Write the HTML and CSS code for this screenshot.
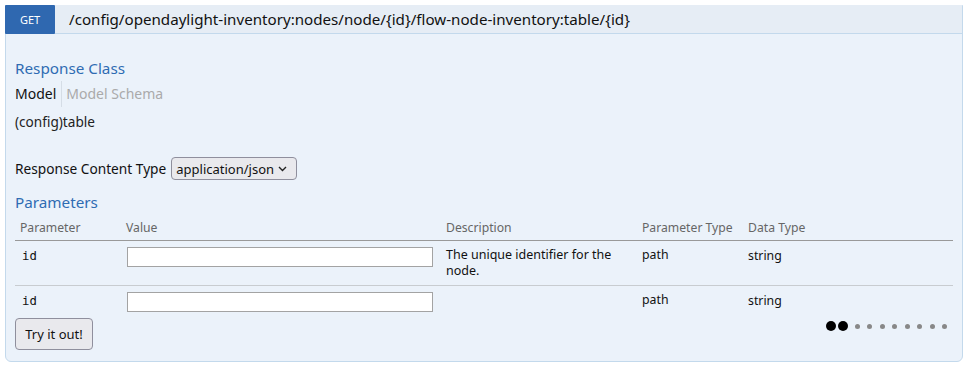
FILE: index.html
```html
<!DOCTYPE html>
<html>
<head>
<meta charset="utf-8">
<link rel="stylesheet" href="styles.css">
</head>
<body>
<div class="op">
  <div class="heading">
    <span class="method">GET</span>
    <span class="path">/config/opendaylight-inventory:nodes/node/{id}/flow-node-inventory:table/{id}</span>
  </div>
  <div class="content">
    <h4 class="title">Response Class</h4>
    <div class="tabs">
      <span class="tab active">Model</span>
      <span class="tab">Model Schema</span>
    </div>
    <div class="model">(config)table</div>
    <div class="ctype">
      <span>Response Content Type</span>
      <span class="select">application/json
        <svg class="chev" width="9" height="6" viewBox="0 0 9 6"><path d="M1 1 L4.5 4.5 L8 1" fill="none" stroke="#222" stroke-width="1.4"/></svg>
      </span>
    </div>
    <h4 class="title params">Parameters</h4>
    <table class="ptable">
      <colgroup>
        <col class="c1"><col class="c2"><col class="c3"><col class="c4"><col class="c5">
      </colgroup>
      <thead>
        <tr><th>Parameter</th><th>Value</th><th>Description</th><th>Parameter Type</th><th>Data Type</th></tr>
      </thead>
      <tbody>
        <tr class="r1">
          <td class="code">id</td>
          <td><input class="inp" type="text"></td>
          <td class="desc">The unique identifier for the node.</td>
          <td class="pt">path</td>
          <td class="dt">string</td>
        </tr>
        <tr class="r2">
          <td class="code">id</td>
          <td><input class="inp" type="text"></td>
          <td class="desc"></td>
          <td class="pt">path</td>
          <td class="dt">string</td>
        </tr>
      </tbody>
    </table>
    <div class="actions">
      <button class="try">Try it out!</button>
      <div class="dots">
        <span class="dot big"></span><span class="dot big"></span>
        <span class="dot"></span><span class="dot"></span><span class="dot"></span><span class="dot"></span><span class="dot"></span><span class="dot"></span><span class="dot"></span><span class="dot"></span>
      </div>
    </div>
  </div>
</div>
</body>
</html>
```
FILE: styles.css
```css
html, body {
  margin: 0;
  padding: 0;
  background: #ffffff;
}
body {
  padding: 5px;
  font-family: "Noto Sans", "Open Sans", sans-serif;
  color: #222;
}
.op {
  width: 958px;
  box-sizing: border-box;
  border: 1px solid #c3d9ec;
  border-radius: 0 0 6px 6px;
  background: #ebf2fa;
}
.heading {
  display: flex;
  align-items: center;
  height: 28px;
  background: #e6edf5;
  border-bottom: 1px solid #c3d9ec;
  margin: -1px 0 0 -1px;
}
.method {
  width: 50px;
  height: 29px;
  background: #2f68b0;
  color: #fff;
  font-size: 11px;
  display: flex;
  align-items: center;
  justify-content: center;
  border-radius: 1px;
  margin-bottom: -1px;
}
.path {
  margin-left: 14px;
  font-size: 15.15px;
  color: #111;
}
.content {
  padding: 23px 9px 11px 9px;
}
.title {
  margin: 0;
  font-size: 15.25px;
  font-weight: normal;
  color: #2f6cb3;
  line-height: 22px;
}
.tabs {
  display: flex;
  align-items: center;
  margin-top: 2px;
  height: 26px;
  font-size: 14px;
}
.tab {
  color: #aaa;
  padding-left: 4px;
  line-height: 26px;
}
.tab.active {
  color: #111;
  padding-left: 0;
  padding-right: 5px;
  border-right: 1px solid #d5dde6;
}
.model {
  font-size: 13.6px;
  margin-top: 6px;
  line-height: 18px;
  color: #222;
}
.ctype {
  display: flex;
  align-items: center;
  margin-top: 26px;
  font-size: 13.7px;
  color: #111;
}
.select {
  display: inline-flex;
  align-items: center;
  margin-left: 5px;
  height: 23px;
  width: 126px;
  box-sizing: border-box;
  padding: 0 9px 0 4px;
  background: #e9e9ed;
  border: 1px solid #8f8f9d;
  border-radius: 4px;
  font-size: 13px;
  color: #111;
  justify-content: space-between;
}
.chev {
  display: block;
}
.params {
  margin-top: 11px;
}
.ptable {
  width: 938px;
  border-collapse: collapse;
  margin-top: 3px;
  table-layout: fixed;
}
.c1 { width: 106px; }
.c2 { width: 320px; }
.c3 { width: 196px; }
.c4 { width: 106px; }
.c5 { width: 210px; }
.ptable th {
  text-align: left;
  font-weight: normal;
  font-size: 12.2px;
  color: #666;
  padding: 3px 5px 4px 5px;
  border-bottom: 1px solid #999;
  line-height: 17px;
}
.ptable td {
  vertical-align: top;
  padding: 6px 5px 0 5px;
  font-size: 12.3px;
  color: #111;
}
.r1 td {
  height: 37px;
  border-bottom: 1px solid #c8ccd0;
}
.r2 td {
  height: 23px;
}
.code {
  font-family: "DejaVu Sans Mono", monospace;
  font-size: 13px;
  padding-left: 7px !important;
  line-height: 18px;
}
.inp {
  display: block;
  width: 306px;
  height: 20px;
  box-sizing: border-box;
  margin: 0 0 0 1px;
  border: 1px solid #a3a3a3;
  background: #fff;
  padding: 0;
}
.desc {
  line-height: 16px;
  font-size: 12.5px !important;
  padding-top: 6px !important;
}
.pt, .dt {
  line-height: 16px;
}
.dt {
  padding-top: 7px !important;
}
.actions {
  display: flex;
  justify-content: space-between;
  align-items: flex-start;
  margin-top: 2px;
}
.try {
  width: 78px;
  height: 32px;
  font-family: "Noto Sans", sans-serif;
  font-size: 13px;
  color: #111;
  background: #e9e9ed;
  border: 1px solid #8f8f9d;
  border-radius: 4px;
  padding: 0;
}
.dots {
  display: flex;
  align-items: center;
  margin-top: 3px;
  margin-right: 2px;
}
.dot {
  width: 5px;
  height: 5px;
  border-radius: 50%;
  background: #888;
  margin: 0 3.75px;
}
.dot.big {
  width: 10px;
  height: 10px;
  background: #000;
  margin: 0 1px;
}
.dot.big + .dot.big {
  margin-right: 2.75px;
}
```
